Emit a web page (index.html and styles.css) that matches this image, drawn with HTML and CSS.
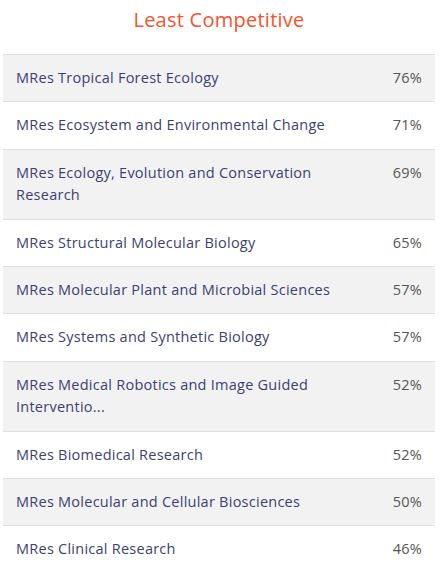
FILE: index.html
```html
<!DOCTYPE html>
<html>
<head>
<meta charset="utf-8">
<link rel="stylesheet" href="styles.css">
</head>
<body>
<div class="wrap">
  <h2 class="title">Least Competitive</h2>
  <div class="table">
    <div class="row alt"><div class="name">MRes Tropical Forest Ecology</div><div class="pct">76%</div></div>
    <div class="row"><div class="name">MRes Ecosystem and Environmental Change</div><div class="pct">71%</div></div>
    <div class="row alt"><div class="name">MRes Ecology, Evolution and Conservation Research</div><div class="pct">69%</div></div>
    <div class="row"><div class="name">MRes Structural Molecular Biology</div><div class="pct">65%</div></div>
    <div class="row alt"><div class="name">MRes Molecular Plant and Microbial Sciences</div><div class="pct">57%</div></div>
    <div class="row"><div class="name">MRes Systems and Synthetic Biology</div><div class="pct">57%</div></div>
    <div class="row alt"><div class="name">MRes Medical Robotics and Image Guided Interventio...</div><div class="pct">52%</div></div>
    <div class="row"><div class="name">MRes Biomedical Research</div><div class="pct">52%</div></div>
    <div class="row alt"><div class="name">MRes Molecular and Cellular Biosciences</div><div class="pct">50%</div></div>
    <div class="row"><div class="name">MRes Clinical Research</div><div class="pct">46%</div></div>
  </div>
</div>
</body>
</html>
```
FILE: styles.css
```css
html, body {
  margin: 0;
  padding: 0;
  background: #ffffff;
}
body {
  font-family: "Open Sans", "Noto Sans", sans-serif;
}
.wrap {
  width: 432px;
  padding-left: 3px;
}
.title {
  margin: 0;
  padding-top: 6px;
  height: 54px;
  box-sizing: border-box;
  text-align: center;
  font-size: 20px;
  line-height: 28px;
  font-weight: 400;
  letter-spacing: 0.25px;
  color: #f4532d;
}
.table {
  border-top: 1px solid #dfdfe3;
}
.row {
  display: flex;
  align-items: flex-start;
  padding: 12px 13px 12px 13px;
  border-bottom: 1px solid #dfdfe3;
  font-size: 14.5px;
  line-height: 22.4px;
  letter-spacing: 0.25px;
}
.row:last-child {
  border-bottom: none;
}
.row.alt {
  background: #f2f2f2;
}
.name {
  flex: 1;
  color: #3d3f72;
  padding-right: 60px;
}
.pct {
  color: #555555;
  text-align: right;
}
```
